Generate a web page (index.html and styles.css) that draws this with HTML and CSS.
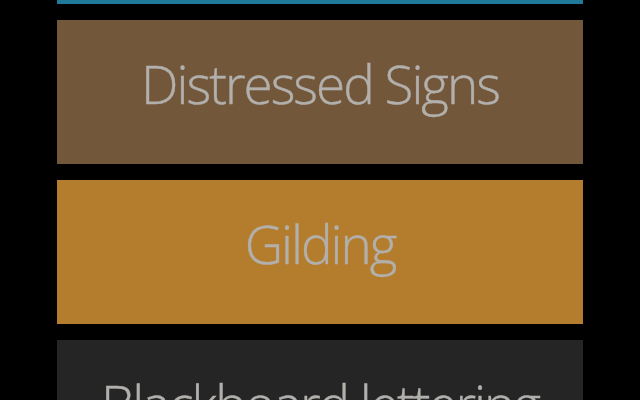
FILE: index.html
```html
<!DOCTYPE html>
<html>
<head>
<meta charset="utf-8">
<link rel="stylesheet" href="styles.css">
</head>
<body>
<div class="list">
  <div class="card teal"></div>
  <div class="card brown"><span class="label">Distressed Signs</span></div>
  <div class="card gold"><span class="label">Gilding</span></div>
  <div class="card dark"><span class="label">Blackboard lettering</span></div>
</div>
</body>
</html>
```
FILE: styles.css
```css
html, body {
  margin: 0;
  padding: 0;
  background: #000;
  overflow: hidden;
}
.list {
  display: flex;
  flex-direction: column;
  gap: 16px;
  padding: 0 57px;
  margin-top: -140px;
}
.card {
  height: 144px;
  display: flex;
  align-items: center;
  justify-content: center;
  padding-bottom: 18px;
  box-sizing: border-box;
}
.label {
  font-family: "Open Sans", "DejaVu Sans", sans-serif;
  font-weight: 300;
  font-size: 53px;
  letter-spacing: -2px;
  -webkit-text-stroke: 0.4px #b2b0ad;
  color: #b2b0ad;
  white-space: nowrap;
}
.teal { background: #1f7a99; }
.brown { background: #73573b; }
.gold { background: #b47c2d; }
.dark { background: #252525; }
```
